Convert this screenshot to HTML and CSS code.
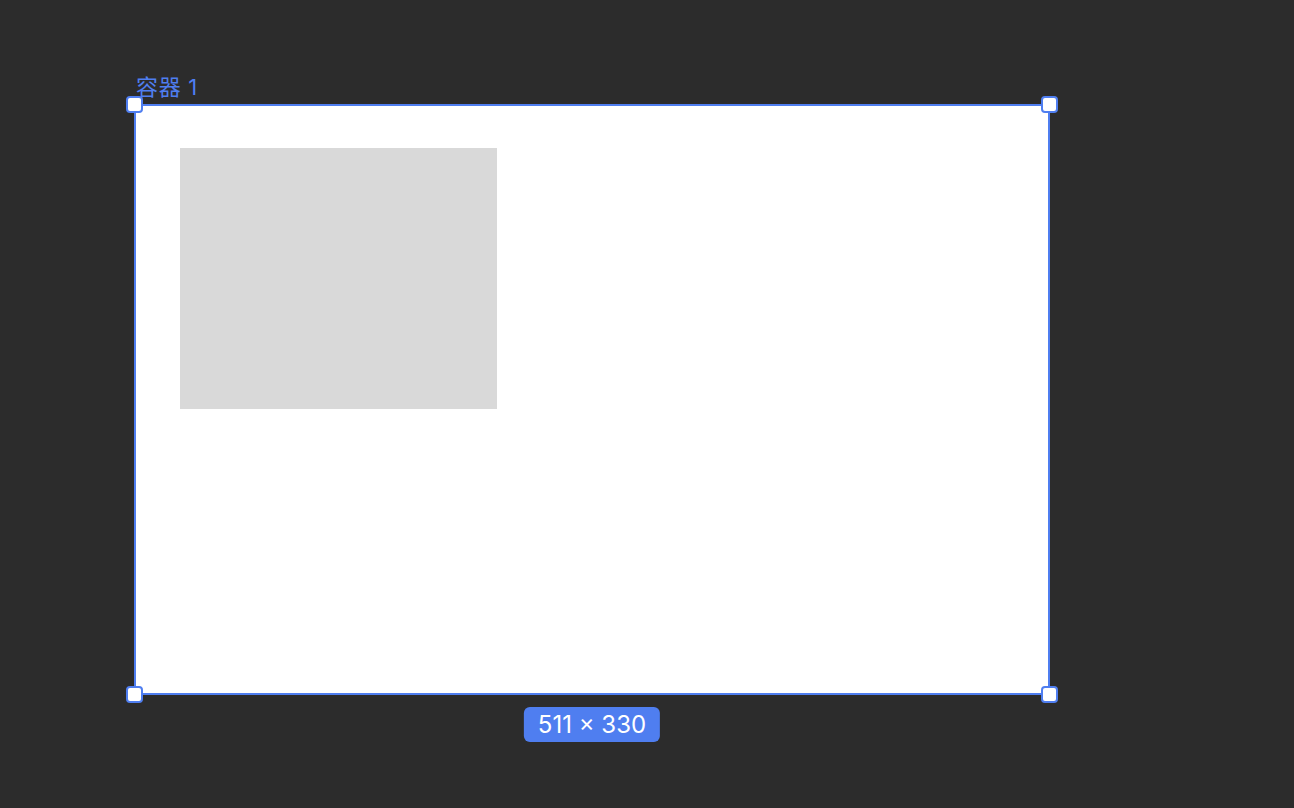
FILE: index.html
```html
<!DOCTYPE html>
<html lang="zh">
<head>
<meta charset="utf-8">
<link rel="stylesheet" href="styles.css">
</head>
<body>
<div class="canvas">
  <div class="frame">
    <div class="frame-label">容器 1</div>
    <div class="frame-body">
      <div class="rect"></div>
    </div>
    <span class="handle tl"></span>
    <span class="handle tr"></span>
    <span class="handle bl"></span>
    <span class="handle br"></span>
    <div class="size-badge">511 × 330</div>
  </div>
</div>
</body>
</html>
```
FILE: styles.css
```css
html, body {
  margin: 0;
  padding: 0;
  background: #2c2c2c;
  width: 1294px;
  height: 808px;
  overflow: hidden;
  font-family: "Inter", "Noto Sans CJK SC", sans-serif;
}
.canvas {
  position: relative;
  width: 1294px;
  height: 808px;
}
.frame {
  position: absolute;
  left: 134px;
  top: 104px;
  width: 916px;
  height: 591px;
}
.frame-label {
  position: absolute;
  left: 2px;
  bottom: 100%;
  margin-bottom: 4px;
  color: #4f7ef0;
  font-size: 22px;
  line-height: 26px;
  letter-spacing: 0.7px;
  white-space: nowrap;
}
.frame-body {
  box-sizing: border-box;
  width: 100%;
  height: 100%;
  background: #ffffff;
  border: 2px solid #4f7ef0;
  padding: 42px 0 0 44px;
}
.rect {
  width: 317px;
  height: 261px;
  background: #d9d9d9;
}
.handle {
  position: absolute;
  width: 17px;
  height: 17px;
  box-sizing: border-box;
  background: #ffffff;
  border: 2px solid #4f7ef0;
  border-radius: 4px;
}
.handle.tl { left: -8px; top: -8px; }
.handle.tr { right: -8px; top: -8px; }
.handle.bl { left: -8px; bottom: -8px; }
.handle.br { right: -8px; bottom: -8px; }
.size-badge {
  position: absolute;
  left: 50%;
  top: 100%;
  margin-top: 12px;
  transform: translateX(-50%);
  background: #4f7ef0;
  color: #ffffff;
  font-size: 24px;
  line-height: 35px;
  padding: 0 14px;
  border-radius: 6px;
  white-space: nowrap;
}
```
